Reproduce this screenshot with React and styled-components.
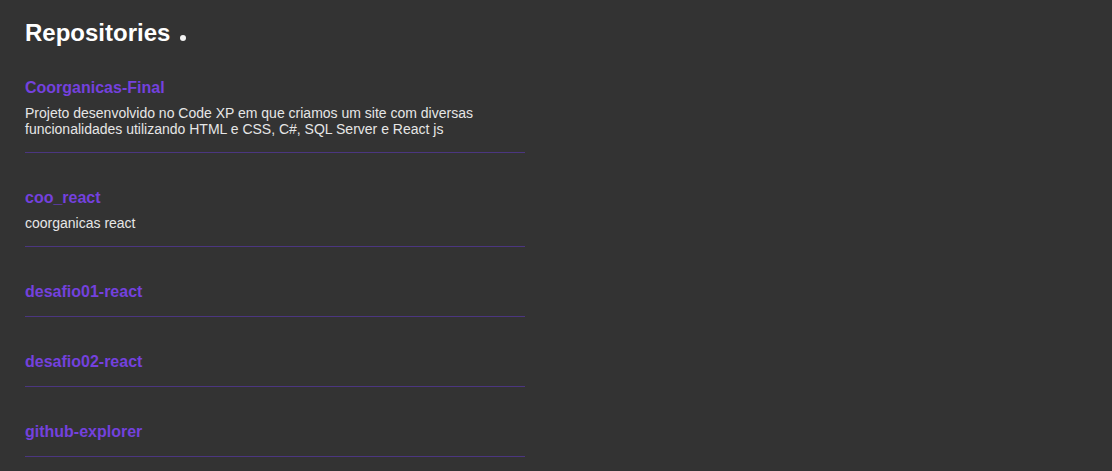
import React from 'react';
import styled, { createGlobalStyle } from 'styled-components';

const GlobalStyle = createGlobalStyle`
  * {
    box-sizing: border-box;
  }

  body {
    margin: 0;
    background: #333333;
    font-family: 'Liberation Sans', Arial, sans-serif;
    -webkit-font-smoothing: antialiased;
  }
`;

const Section = styled.section`
  padding: 19px 25px 0;
  width: 550px;
`;

const Header = styled.header`
  display: flex;
  align-items: center;
`;

const Title = styled.h1`
  margin: 0;
  color: #fff;
  font-size: 24px;
  line-height: 28px;
  font-weight: 700;
`;

const Dot = styled.span`
  width: 6px;
  height: 6px;
  border-radius: 50%;
  background: #f2f2f2;
  margin: 9px 0 0 10px;
`;

const List = styled.ul`
  list-style: none;
  margin: 32px 0 0;
  padding: 0;
  display: flex;
  flex-direction: column;
  gap: 36px;
  width: 500px;
`;

const Item = styled.li`
  padding-bottom: 15px;
  border-bottom: 1px solid #4b3680;
`;

const Name = styled.strong`
  display: block;
  color: #7441de;
  font-size: 16px;
  line-height: 18px;
  font-weight: 700;
`;

const Description = styled.p`
  margin: 8px 0 0;
  color: #e6e6e6;
  font-size: 14px;
  line-height: 16px;
`;

const repositories = [
  {
    name: 'Coorganicas-Final',
    description:
      'Projeto desenvolvido no Code XP em que criamos um site com diversas funcionalidades utilizando HTML e CSS, C#, SQL Server e React js',
  },
  { name: 'coo_react', description: 'coorganicas react' },
  { name: 'desafio01-react' },
  { name: 'desafio02-react' },
  { name: 'github-explorer' },
];

export default function App() {
  return (
    <>
      <GlobalStyle />
      <Section>
        <Header>
          <Title>Repositories</Title>
          <Dot />
        </Header>
        <List>
          {repositories.map(repo => (
            <Item key={repo.name}>
              <Name>{repo.name}</Name>
              {repo.description && <Description>{repo.description}</Description>}
            </Item>
          ))}
        </List>
      </Section>
    </>
  );
}
